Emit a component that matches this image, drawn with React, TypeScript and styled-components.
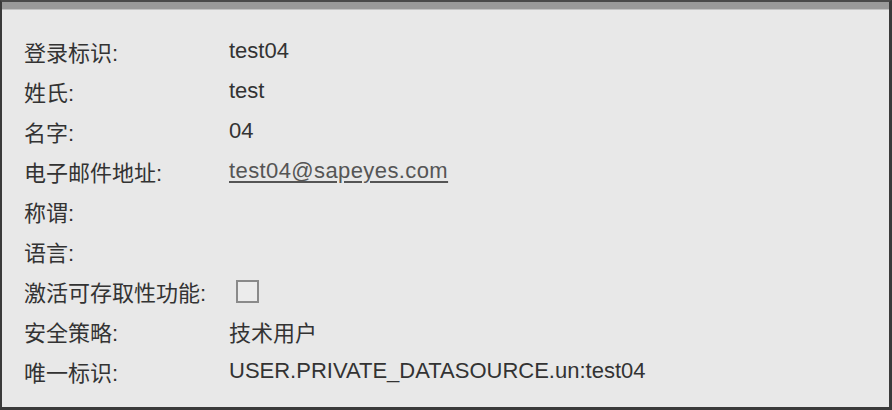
import { createGlobalStyle, styled } from 'styled-components'

const GlobalStyle = createGlobalStyle`
  html, body {
    margin: 0;
    padding: 0;
    background: #e8e8e8;
  }
`

const Frame = styled.div`
  box-sizing: border-box;
  width: 892px;
  height: 410px;
  background: #e8e8e8;
  border-left: 2px solid #3a3a3a;
  border-right: 3px solid #3a3a3a;
  border-bottom: 3px solid #3a3a3a;
  border-top: 2px solid #4a4a4a;
  display: flex;
  flex-direction: column;
`

const TopBar = styled.div`
  height: 7px;
  background: #9a9a9a;
  border-bottom: 1px solid #c4c4c4;
`

const Fields = styled.div`
  display: grid;
  grid-template-columns: 205px 1fr;
  grid-auto-rows: 40px;
  padding: 21px 0 0 22px;
  font-family: 'Liberation Sans', 'Noto Sans CJK SC', sans-serif;
  font-size: 22px;
  color: #333;
`

const Label = styled.div`
  display: flex;
  align-items: center;
`

const Value = styled.div`
  display: flex;
  align-items: center;
`

const Link = styled.a`
  color: #555;
  letter-spacing: 0.4px;
  text-decoration: underline;
  text-underline-offset: 3px;
`

const CheckBox = styled.span`
  box-sizing: border-box;
  width: 23px;
  height: 23px;
  margin-left: 7px;
  border: 2px solid #8a8a8a;
  background: #ececec;
`

const rows: Array<[string, React.ReactNode]> = [
  ['登录标识:', 'test04'],
  ['姓氏:', 'test'],
  ['名字:', '04'],
  ['电子邮件地址:', <Link href="#">test04@sapeyes.com</Link>],
  ['称谓:', ''],
  ['语言:', ''],
  ['激活可存取性功能:', <CheckBox />],
  ['安全策略:', '技术用户'],
  ['唯一标识:', 'USER.PRIVATE_DATASOURCE.un:test04'],
]

export default function App() {
  return (
    <>
      <GlobalStyle />
      <Frame>
        <TopBar />
        <Fields>
          {rows.map(([label, value]) => (
            <>
              <Label key={label}>{label}</Label>
              <Value key={label + '-v'}>{value}</Value>
            </>
          ))}
        </Fields>
      </Frame>
    </>
  )
}
